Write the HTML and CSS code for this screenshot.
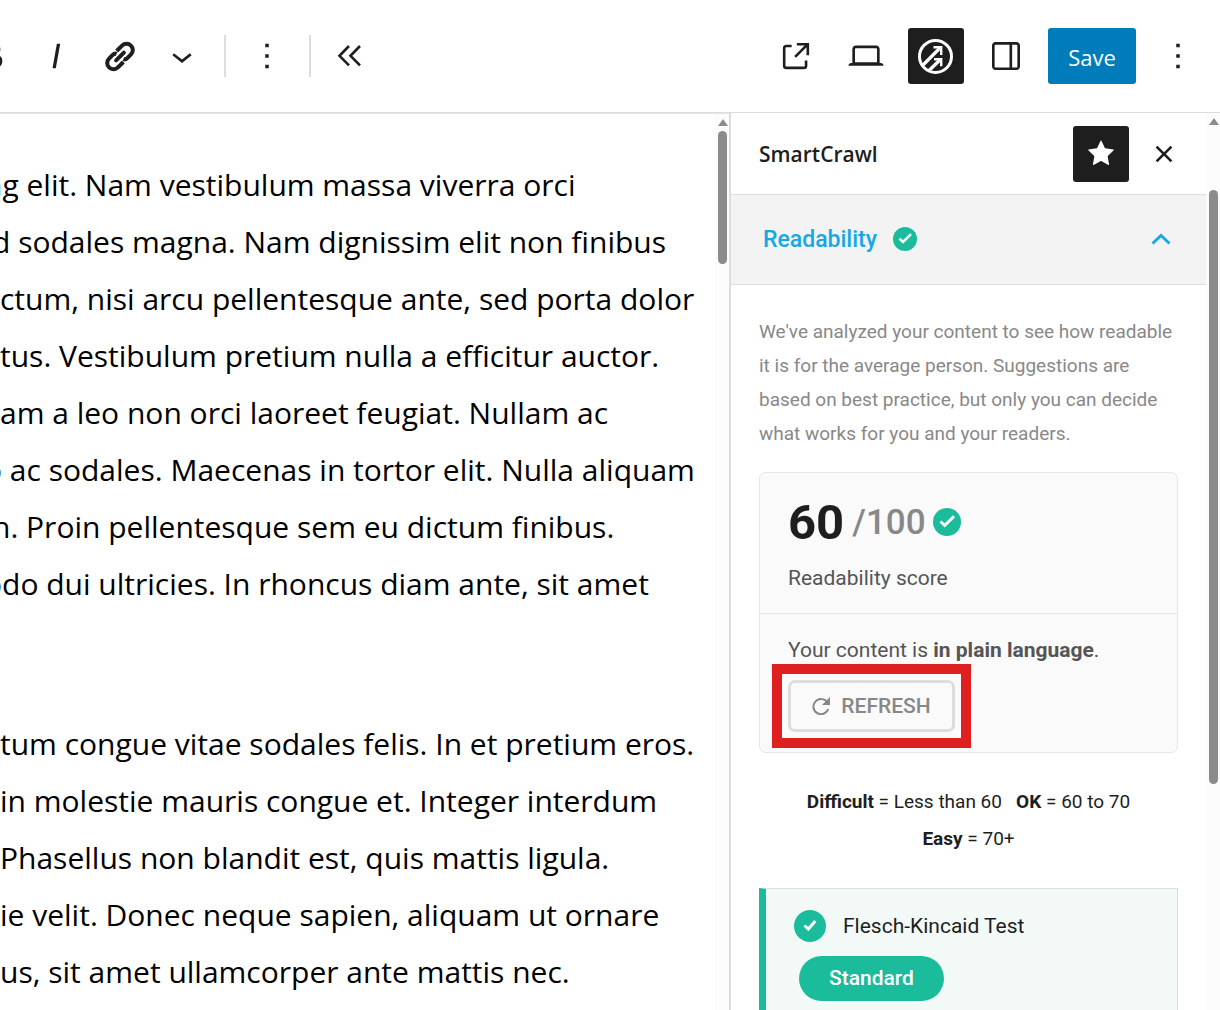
FILE: index.html
```html
<!DOCTYPE html>
<html lang="en">
<head>
<meta charset="utf-8">
<meta name="viewport" content="width=device-width, initial-scale=1">
<title>Edit Post</title>
<link rel="stylesheet" href="styles.css">
</head>
<body>
<div class="app">
  <header class="topbar">
    <div class="tools">
      <button class="tool" aria-label="Bold"><svg class="icon" viewBox="0 0 24 24"><path d="M14.7 11.3c1-.6 1.5-1.6 1.5-3 0-2.3-1.3-3.4-4-3.4H7v14h5.8c1.4 0 2.5-.3 3.3-1 .8-.7 1.2-1.7 1.2-2.9.1-1.9-.8-3.1-2.6-3.7zm-5.1-4h2.3c.6 0 1.1.1 1.4.4.3.3.5.7.5 1.2s-.2 1-.5 1.2c-.3.3-.8.4-1.4.4H9.6V7.3zm4.6 9c-.4.3-1 .4-1.7.4H9.6v-3.9h2.9c.7 0 1.3.2 1.7.5.4.3.6.8.6 1.4s-.2 1.2-.6 1.6z"/></svg></button>
      <button class="tool" aria-label="Italic"><svg class="icon" viewBox="0 0 24 24"><path d="M12.5 5L10 19h1.9l2.5-14z"/></svg></button>
      <button class="tool" aria-label="Link"><svg class="icon icon-line" viewBox="0 0 42 42"><g transform="translate(1 .5) rotate(-45 21 21)" stroke-width="4"><path d="M19.500 27.300H11.800a6.300 6.300 0 0 1 0-12.600H17q2.500 0 3.500 2M22.500 14.700h7.700a6.300 6.300 0 0 1 0 12.600H25q-2.500 0-3.500-2"/><path stroke-linecap="round" d="M15.500 21h11"/></g></svg></button>
      <button class="tool" aria-label="More formatting"><svg class="icon" viewBox="0 0 24 24"><path d="M17.500 11.600L12 16l-5.500-4.400.9-1.200L12 14l4.500-3.600 1 1.200z"/></svg></button>
      <span class="divider"></span>
      <button class="tool" aria-label="Options"><svg class="icon" viewBox="0 0 24 24"><path d="M13 19h-2v-2h2v2zm0-6h-2v-2h2v2zm0-6h-2V5h2v2z"/></svg></button>
      <span class="divider"></span>
      <button class="tool" aria-label="Hide block tools"><svg class="icon icon-line" viewBox="0 0 42 42"><path stroke-width="2.600" d="M18 11L8.500 20.800l9.500 9.500M29 11l-9.500 9.800 9.500 9.500"/></svg></button>
    </div>
    <div class="actions">
      <button class="action" aria-label="View post"><svg class="icon" viewBox="0 0 24 24"><path d="M19.500 4.500h-7V6h4.440l-5.970 5.970 1.060 1.060L18 7.060v4.440h1.500v-7Zm-13 1a2 2 0 0 0-2 2v10a2 2 0 0 0 2 2h10a2 2 0 0 0 2-2v-3H17v3a.5.5 0 0 1-.5.5h-10a.5.5 0 0 1-.5-.5v-10a.5.5 0 0 1 .5-.5h3V5.500h-3Z"/></svg></button>
      <button class="action" aria-label="Preview"><svg class="icon" viewBox="0 0 24 24"><path d="M20.500 16h-.7V8c0-1.100-.9-2-2-2H6.200c-1.100 0-2 .9-2 2v8h-.7c-.8 0-1.500.7-1.500 1.500h20c0-.8-.7-1.500-1.500-1.500zM5.700 8c0-.3.2-.5.5-.5h11.600c.3 0 .5.2.5.5v7.600H5.700V8z"/></svg></button>
      <button class="action action-on" aria-label="SmartCrawl"><svg class="icon icon-line" viewBox="0 0 42 42"><circle cx="20.500" cy="21.400" r="16" stroke-width="3"/><path stroke-width="3.200" d="M7.500 30.500L25.500 12.500M14 35.500L26 24"/><path stroke-width="2.400" d="M18.500 12.200h7.700v7.700M19 24.200h7.200v7"/></svg></button>
      <button class="action" aria-label="Settings"><svg class="icon" viewBox="0 0 24 24"><path d="M18 4H6c-1.100 0-2 .9-2 2v12c0 1.100.9 2 2 2h12c1.100 0 2-.9 2-2V6c0-1.100-.9-2-2-2zm-4 14.500H6c-.3 0-.5-.2-.5-.5V6c0-.3.2-.5.5-.5h8v13zm4.500-.5c0 .3-.2.5-.5.5h-2.500v-13H18c.3 0 .5.2.5.5v12z"/></svg></button>
      <button class="save">Save</button>
      <button class="action" aria-label="More options"><svg class="icon" viewBox="0 0 24 24"><path d="M13 19h-2v-2h2v2zm0-6h-2v-2h2v2zm0-6h-2V5h2v2z"/></svg></button>
    </div>
  </header>

  <div class="workspace">
    <main class="editor">
      <div class="copy">
        <p>
          <span class="line cut-wide">ng elit. Nam vestibulum massa viverra orci</span>
          <span class="line cut">d sodales magna. Nam dignissim elit non finibus</span>
          <span class="line">ctum, nisi arcu pellentesque ante, sed porta dolor</span>
          <span class="line">tus. Vestibulum pretium nulla a efficitur auctor.</span>
          <span class="line">am a leo non orci laoreet feugiat. Nullam ac</span>
          <span class="line cut-wide">o ac sodales. Maecenas in tortor elit. Nulla aliquam</span>
          <span class="line cut">n. Proin pellentesque sem eu dictum finibus.</span>
          <span class="line cut-wide">odo dui ultricies. In rhoncus diam ante, sit amet</span>
        </p>
        <p>
          <span class="line">tum congue vitae sodales felis. In et pretium eros.</span>
          <span class="line">in molestie mauris congue et. Integer interdum</span>
          <span class="line">Phasellus non blandit est, quis mattis ligula.</span>
          <span class="line">ie velit. Donec neque sapien, aliquam ut ornare</span>
          <span class="line">us, sit amet ullamcorper ante mattis nec.</span>
        </p>
      </div>
      <div class="scrollbar"><span class="scroll-arrow"></span><span class="scroll-thumb thumb-editor"></span></div>
    </main>

    <aside class="sidebar">
      <div class="panel">
        <div class="panel-head">
          <h2>SmartCrawl</h2>
          <button class="action action-on" aria-label="Unpin from toolbar"><svg class="icon" viewBox="0 0 24 24"><path d="M11.776 4.454a.25.25 0 01.448 0l2.069 4.192a.25.25 0 00.188.137l4.626.672a.25.25 0 01.139.426l-3.348 3.263a.25.25 0 00-.072.222l.79 4.607a.25.25 0 01-.362.263l-4.138-2.175a.25.25 0 00-.232 0l-4.138 2.175a.25.25 0 01-.363-.263l.79-4.607a.25.25 0 00-.071-.222L4.754 9.881a.25.25 0 01.139-.426l4.626-.672a.25.25 0 00.188-.137l2.069-4.192z"/></svg></button>
          <button class="close" aria-label="Close"><svg class="icon" viewBox="0 0 24 24"><path d="M12 13.060l3.712 3.713 1.061-1.060L13.061 12l3.712-3.712-1.060-1.060L12 10.938 8.288 7.227l-1.061 1.060L10.939 12l-3.712 3.712 1.060 1.061L12 13.061z"/></svg></button>
        </div>
        <button class="section-toggle" aria-expanded="true">
          <span>Readability</span>
          <svg class="check-small" viewBox="0 0 28 28"><circle cx="14" cy="14" r="14"/><path d="M7.500 13.500l4.200 4L21 8.300"/></svg>
          <svg class="chevron" viewBox="0 0 20 12"><path d="M1.500 10.500L10 2.500l8.500 8"/></svg>
        </button>
        <div class="section">
          <p class="intro">We've analyzed your content to see how readable it is for the average person. Suggestions are based on best practice, but only you can decide what works for you and your readers.</p>
          <div class="card">
            <div class="card-top">
              <div class="score"><strong>60</strong><span>/100</span><svg class="check-medium" viewBox="0 0 28 28"><circle cx="14" cy="14" r="14"/><path d="M7.500 13.500l4.200 4L21 8.300"/></svg></div>
              <div class="score-label">Readability score</div>
            </div>
            <div class="card-bottom">
              <div class="verdict">Your content is <strong>in plain language</strong>.</div>
              <div class="highlight">
                <button class="refresh"><svg viewBox="0 0 18 18"><path class="arc" d="M15.800 6.200A7.600 7.600 0 1 0 16.200 12"/><path class="tip" d="M18 0v8h-8z"/></svg>REFRESH</button>
              </div>
            </div>
          </div>
          <p class="legend"><strong>Difficult</strong> = Less than 60 &nbsp; <strong>OK</strong> = 60 to 70<br><strong>Easy</strong> = 70+</p>
          <div class="test">
            <div class="test-head"><svg class="check-large" viewBox="0 0 32 32"><circle cx="16" cy="16" r="16"/><path d="M10.500 15.500l3.800 3.500 7-8"/></svg><span>Flesch-Kincaid Test</span></div>
            <span class="pill">Standard</span>
          </div>
        </div>
      </div>
      <div class="scrollbar"><span class="scroll-arrow"></span><span class="scroll-thumb thumb-panel"></span></div>
    </aside>
  </div>
</div>
</body>
</html>
```
FILE: styles.css
```css
* { box-sizing: border-box; }

body {
  margin: 0;
  background: #fff;
  color: #1e1e1e;
  font-family: Roboto, "Liberation Sans", sans-serif;
}

button {
  margin: 0;
  padding: 0;
  border: 0;
  background: none;
  color: inherit;
  font: inherit;
}

p, h2 { margin: 0; }
svg { display: block; flex: none; }

.app {
  display: flex;
  flex-direction: column;
  height: 100vh;
  overflow: hidden;
}

/* Top toolbar */
.topbar {
  display: flex;
  flex: none;
  align-items: center;
  justify-content: space-between;
  height: 113px;
  padding-right: 14px;
  border-bottom: 1px solid #ddd;
}

.tools, .actions { display: flex; align-items: center; }
.tools { margin-left: -39px; }
.actions { gap: 14px; }

.tool, .action {
  display: flex;
  align-items: center;
  justify-content: center;
  height: 56px;
}
.tool { width: 63px; }
.action { width: 56px; border-radius: 3px; }
.action-on { background: #1e1e1e; color: #fff; }

.divider {
  width: 2px;
  height: 42px;
  margin: 0 9px 0 11px;
  background: #ddd;
}

.icon { width: 42px; height: 42px; fill: currentColor; }
.icon-line { fill: none; stroke: currentColor; }

.save {
  width: 88px;
  height: 56px;
  padding-top: 2px;
  border-radius: 3px;
  background: #007cba;
  color: #fff;
  font-family: "Open Sans", "Noto Sans", sans-serif;
  font-size: 22px;
}

/* Editor */
.workspace { display: flex; flex: 1; min-height: 0; }
.editor {
  display: flex;
  flex: 1;
  min-width: 0;
  border-top: 1px solid #e5e5e5;
}
.copy {
  flex: 1;
  min-width: 0;
  overflow: hidden;
  padding-top: 42px;
  color: #000;
  font-family: "Open Sans", "Noto Sans", sans-serif;
  font-size: 30px;
  line-height: 57px;
}
.copy p + p { margin-top: 103px; }
.line { display: block; white-space: nowrap; }
.cut { margin-left: -8px; }
.cut-wide { margin-left: -16px; }

.scrollbar {
  display: flex;
  flex: none;
  flex-direction: column;
  align-items: center;
  width: 14px;
  padding: 5px 0 0 1px;
  background: #fcfcfc;
}
.scroll-arrow {
  border: 5px solid transparent;
  border-top: 0;
  border-bottom: 7px solid #8b8b8b;
}
.scroll-thumb {
  width: 9px;
  border-radius: 5px;
  background: #8b8b8b;
}
.thumb-editor { height: 133px; margin-top: 5px; }
.thumb-panel { height: 594px; margin-top: 65px; }

/* Sidebar */
.sidebar {
  display: flex;
  flex: none;
  width: 491px;
  border-left: 2px solid #ddd;
}
.panel { flex: 1; min-width: 0; overflow: hidden; }

.panel-head {
  display: flex;
  align-items: center;
  height: 82px;
  padding: 0 21px 0 28px;
  border-bottom: 1px solid #ddd;
}
.panel-head h2 {
  flex: 1;
  font-family: "Open Sans", "Noto Sans", sans-serif;
  font-size: 21px;
  font-weight: 600;
}
.close { margin-left: 14px; }

.section-toggle {
  display: flex;
  align-items: center;
  width: 100%;
  height: 90px;
  padding: 0 35px 1px 32px;
  border-bottom: 1px solid #ddd;
  background: #f3f3f3;
  color: #17a8e3;
  font-size: 23px;
  font-weight: 500;
}
.chevron {
  width: 20px;
  height: 12px;
  margin-left: auto;
  fill: none;
  stroke: currentColor;
  stroke-width: 3;
}

.check-small, .check-medium, .check-large { fill: #1abc9c; }
.check-small path, .check-medium path, .check-large path {
  fill: none;
  stroke: #fff;
  stroke-width: 3;
}
.check-small { width: 24px; height: 24px; margin-left: 16px; }
.check-medium { width: 28px; height: 28px; margin-left: 7px; }
.check-large { width: 32px; height: 32px; }

.section { padding: 30px 28px; }
.intro {
  color: #888;
  font-size: 19px;
  line-height: 34px;
}

.card {
  margin-top: 21px;
  border: 1px solid #e6e6e6;
  border-radius: 7px;
  background: #fafafa;
  color: #555;
  font-size: 21px;
}
.card-top { padding: 21px 28px; border-bottom: 1px solid #e6e6e6; }
.card-bottom { padding: 22px 28px 4px; }
.score { display: flex; align-items: center; height: 56px; }
.score strong { color: #1e1e1e; font-size: 49px; }
.score span { margin-left: 8px; color: #888; font-size: 35px; font-weight: 500; }
.score-label { margin-top: 14px; line-height: 28px; }
.verdict { line-height: 28px; }

.highlight {
  width: fit-content;
  margin-left: -16px;
  padding: 6px;
  border: 10px solid #df2020;
}
.refresh {
  display: flex;
  align-items: center;
  justify-content: center;
  gap: 11px;
  width: 167px;
  height: 52px;
  border: 3px solid #ddd;
  border-radius: 7px;
  color: #888;
  font-size: 21px;
  font-weight: 500;
}
.refresh svg { width: 18px; height: 18px; }
.arc { fill: none; stroke: currentColor; stroke-width: 2; }
.tip { fill: currentColor; }

.legend {
  margin-top: 30px;
  font-size: 19px;
  line-height: 37px;
  text-align: center;
}

.test {
  height: 160px;
  margin-top: 31px;
  padding: 21px 28px;
  border: 1px solid #ddd;
  border-left: 7px solid #1abc9c;
  background: #f3f9f7;
  font-size: 21px;
}
.test-head { display: flex; align-items: center; gap: 17px; }
.pill {
  display: block;
  width: fit-content;
  margin: 14px 0 0 5px;
  padding: 0 30px;
  border-radius: 23px;
  background: #1abc9c;
  color: #fff;
  font-weight: 500;
  line-height: 45px;
}
```
